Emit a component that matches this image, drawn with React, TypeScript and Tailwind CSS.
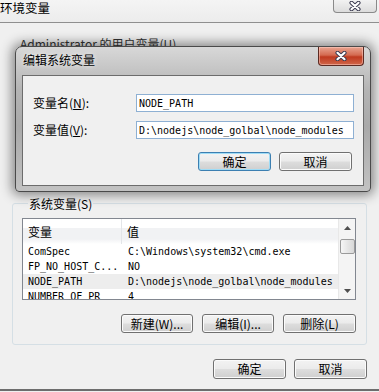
import React from 'react';

const cjk = "font-['Noto_Sans_CJK_SC','Noto_Sans',sans-serif]";
const mono = "font-['DejaVu_Sans_Mono','Noto_Sans_CJK_SC',monospace]";

type BtnProps = { children: React.ReactNode; className?: string; primary?: boolean };

const WinButton: React.FC<BtnProps> = ({ children, className = '', primary = false }) => (
  <div
    className={`flex items-center justify-center rounded-[3px] border text-[12px] leading-none text-black bg-[linear-gradient(180deg,#f3f3f3_0%,#ebebeb_48%,#dddddd_52%,#cfcfcf_100%)] ${
      primary
        ? 'border-[#3c7fb1] shadow-[inset_0_0_0_1px_#9fdcf6]'
        : 'border-[#707070] shadow-[inset_0_0_0_1px_#fbfbfb]'
    } ${cjk} ${className}`}
  >
    {children}
  </div>
);

const CloseX: React.FC = () => (
  <svg width="14" height="10" viewBox="0 0 14 10">
    <path d="M3.5 1.8 L10.5 8.2 M10.5 1.8 L3.5 8.2" stroke="#3d3d52" strokeWidth="4.2" strokeLinecap="round" />
    <path d="M3.5 1.8 L10.5 8.2 M10.5 1.8 L3.5 8.2" stroke="#ffffff" strokeWidth="2.2" strokeLinecap="round" />
  </svg>
);

const rows = [
  { name: 'ComSpec', value: 'C:\\Windows\\system32\\cmd.exe' },
  { name: 'FP_NO_HOST_C...', value: 'NO' },
  { name: 'NODE_PATH', value: 'D:\\nodejs\\node_golbal\\node_modules', selected: true },
  { name: 'NUMBER_OF_PR', value: '4' },
];

const EditDialog: React.FC = () => (
  <div className="absolute left-[15px] top-[46px] flex h-[146px] w-[356px] flex-col rounded-t-[7px] rounded-b-[4px] border border-[#4a4a4a] bg-[linear-gradient(180deg,#d8d8d8_0%,#b4b4b4_30%,#a9a9a9_55%,#c2c2c2_100%)] px-[6px] pb-[5px] shadow-[0_0_12px_3px_rgba(0,0,0,0.45)]">
    <div className="flex h-[28px] items-start justify-between">
      <span className={`mt-[6px] pl-[1px] text-[12px] leading-[14px] text-black [text-shadow:0_0_5px_#ffffff] ${cjk}`}>
        编辑系统变量
      </span>
      <div className="flex h-[19px] w-[46px] items-center justify-center rounded-b-[4px] border border-t-0 border-[#5c2a22] bg-[linear-gradient(180deg,#e9a591_0%,#d46a50_45%,#bf3a1f_55%,#d0664a_100%)] shadow-[inset_0_0_0_1px_rgba(255,210,200,0.5)]">
        <CloseX />
      </div>
    </div>
    <div className="flex-1 border border-[#6c6c6c] bg-[#f0f0f0] pl-[10px] pr-[9px] pt-[18px]">
      <div className="flex h-[18px] items-center">
        <span className={`w-[103px] text-[12px] leading-none text-black ${cjk}`}>
          变量名(<span className="underline">N</span>):
        </span>
        <div className={`flex h-[18px] w-[218px] items-center border border-[#8eb0d3] bg-white pl-[2px] text-[10px] text-black ${mono}`}>
          NODE_PATH
        </div>
      </div>
      <div className="mt-[9px] flex h-[18px] items-center">
        <span className={`w-[103px] text-[12px] leading-none text-black ${cjk}`}>
          变量值(<span className="underline">V</span>):
        </span>
        <div className={`flex h-[18px] w-[218px] items-center border border-[#8eb0d3] bg-white pl-[2px] text-[10px] text-black ${mono}`}>
          D:\nodejs\node_golbal\node_modules
        </div>
      </div>
      <div className="mr-[2px] mt-[13px] flex justify-end gap-[8px]">
        <WinButton primary className="h-[19px] w-[73px]">确定</WinButton>
        <WinButton className="h-[19px] w-[73px]">取消</WinButton>
      </div>
    </div>
  </div>
);

const Arrow: React.FC<{ up?: boolean }> = ({ up }) => (
  <svg width="7" height="4" viewBox="0 0 7 4">
    <path d={up ? 'M0 4 L3.5 0 L7 4 Z' : 'M0 0 L3.5 4 L7 0 Z'} fill="#4e4e4e" />
  </svg>
);

const VarList: React.FC = () => (
  <div className="flex h-[82px] border border-[#828790] bg-white">
    <div className="flex-1 overflow-hidden">
      <div className={`flex h-[25px] bg-[linear-gradient(180deg,#ffffff_0%,#ffffff_35%,#f1f2f4_35%,#f1f2f4_80%,#ffffff_100%)] text-[12px] text-black ${cjk}`}>
        <div className="flex w-[99px] items-center border-r border-[#e3e5e8] pl-[5px]">变量</div>
        <div className="flex flex-1 items-center pl-[5px]">值</div>
      </div>
      {rows.map((r) => (
        <div
          key={r.name}
          className={`flex h-[15px] items-center text-[10px] text-black ${mono} ${r.selected ? 'bg-[#ededed]' : ''}`}
        >
          <div className="w-[99px] whitespace-nowrap pl-[5px]">{r.name}</div>
          <div className="whitespace-nowrap pl-[6px]">{r.value}</div>
        </div>
      ))}
    </div>
    <div className="flex w-[17px] flex-col items-center border-l border-[#e8e8e8] bg-[#f4f4f4]">
      <div className="flex h-[17px] items-center justify-center">
        <Arrow up />
      </div>
      <div className="mt-[3px] h-[15px] w-[15px] rounded-[2px] border border-[#9a9a9a] bg-[linear-gradient(90deg,#f6f6f6_0%,#e6e6e6_50%,#d8d8d8_100%)]" />
      <div className="flex-1" />
      <div className="flex h-[17px] items-center justify-center">
        <Arrow />
      </div>
    </div>
  </div>
);

const App: React.FC = () => {
  return (
    <div className={`relative h-[392px] w-[379px] overflow-hidden bg-[#f0f0f0] ${cjk}`}>
      <div className="flex h-[23px] items-start border-b border-[#8f8f8f] bg-[linear-gradient(180deg,#f4f4f4_0%,#ececec_100%)]">
        <span className="mt-[1px] text-[12.5px] leading-[14px] text-black">环境变量</span>
        <div className="ml-auto mr-[2px] flex h-[13px] w-[44px] items-end justify-center rounded-b-[4px] border border-t-0 border-[#8a8a8a] bg-[linear-gradient(180deg,#f2f2f2_0%,#dcdcdc_100%)] pb-[1px]">
          <CloseX />
        </div>
      </div>

      <div className="mt-[14px] pl-[20px] text-[12px] leading-[14px] text-[#333333]">Administrator 的用户变量(U)</div>

      <fieldset className="mx-[12px] mt-[146px] rounded-[3px] border border-[#d5dfe5] pb-[11px] pl-[9px] pr-[10px] pt-[8px]">
        <legend className="ml-[6px] px-[1px] text-[12px] leading-[13px] text-black">系统变量(S)</legend>
        <VarList />
        <div className="mt-[14px] flex justify-end gap-[9px]">
          <WinButton className="h-[19px] w-[72px]">新建(W)...</WinButton>
          <WinButton className="h-[19px] w-[72px]">编辑(I)...</WinButton>
          <WinButton className="h-[19px] w-[73px]">删除(L)</WinButton>
        </div>
      </fieldset>

      <div className="mr-[12px] mt-[14px] flex justify-end gap-[8px]">
        <WinButton className="h-[20px] w-[73px]">确定</WinButton>
        <WinButton className="h-[20px] w-[73px]">取消</WinButton>
      </div>

      <div className="mt-[10px] h-[2px] bg-[#6d6d6d]" />

      <EditDialog />
    </div>
  );
};

export default App;
